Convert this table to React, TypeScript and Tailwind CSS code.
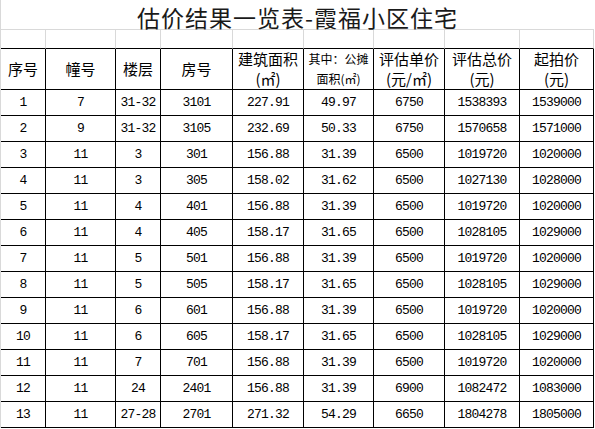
const cols = "grid grid-cols-[45px_70px_45px_72px_71px_70px_71px_75px_74px]";

const rows: string[][] = [
  ["1", "7", "31-32", "3101", "227.91", "49.97", "6750", "1538393", "1539000"],
  ["2", "9", "31-32", "3105", "232.69", "50.33", "6750", "1570658", "1571000"],
  ["3", "11", "3", "301", "156.88", "31.39", "6500", "1019720", "1020000"],
  ["4", "11", "3", "305", "158.02", "31.62", "6500", "1027130", "1028000"],
  ["5", "11", "4", "401", "156.88", "31.39", "6500", "1019720", "1020000"],
  ["6", "11", "4", "405", "158.17", "31.65", "6500", "1028105", "1029000"],
  ["7", "11", "5", "501", "156.88", "31.39", "6500", "1019720", "1020000"],
  ["8", "11", "5", "505", "158.17", "31.65", "6500", "1028105", "1029000"],
  ["9", "11", "6", "601", "156.88", "31.39", "6500", "1019720", "1020000"],
  ["10", "11", "6", "605", "158.17", "31.65", "6500", "1028105", "1029000"],
  ["11", "11", "7", "701", "156.88", "31.39", "6500", "1019720", "1020000"],
  ["12", "11", "24", "2401", "156.88", "31.39", "6900", "1082472", "1083000"],
  ["13", "11", "27-28", "2701", "271.32", "54.29", "6650", "1804278", "1805000"],
];

const sans = "font-['Noto_Sans_CJK_SC',sans-serif]";
const mono = "font-['Liberation_Mono','Noto_Sans_CJK_SC',monospace]";

function HeaderCell({ lines, small }: { lines: string[]; small?: boolean }) {
  return (
    <div className="flex flex-col items-center justify-center border-r border-b border-black leading-[20px]">
      {lines.map((l, i) => (
        <span key={i} className={small ? "text-[12px]" : "text-[15px]"}>
          {l}
        </span>
      ))}
    </div>
  );
}

export default function App() {
  return (
    <div className="w-[595px] h-[429px] bg-white overflow-hidden text-black">
      <div className="w-[594px] border-l border-[#d9d9d9]">
        <div
          className={`h-[30px] text-center border-b border-[#d9d9d9] text-[23px] tracking-[1px] leading-[30px] pt-[2px] text-[#1a1a1a] ${sans}`}
        >
          估价结果一览表-霞福小区住宅
        </div>
        <div className={`${cols} h-[19px]`}>
          {Array.from({ length: 9 }).map((_, i) => (
            <div key={i} className="border-r border-b border-r-[#d9d9d9] border-b-black" />
          ))}
        </div>
        <div className={`${cols} h-[41px] ${sans}`}>
          <HeaderCell lines={["序号"]} />
          <HeaderCell lines={["幢号"]} />
          <HeaderCell lines={["楼层"]} />
          <HeaderCell lines={["房号"]} />
          <HeaderCell lines={["建筑面积", "(㎡)"]} />
          <HeaderCell lines={["其中：公摊", "面积(㎡)"]} small />
          <HeaderCell lines={["评估单价", "(元/㎡)"]} />
          <HeaderCell lines={["评估总价", "(元)"]} />
          <HeaderCell lines={["起拍价", "(元)"]} />
        </div>
        {rows.map((r, ri) => (
          <div key={ri} className={`${cols} h-[26px] ${mono}`}>
            {r.map((c, ci) => (
              <div
                key={ci}
                className="flex items-center justify-center border-r border-b border-black text-[13px] tracking-[-0.8px]"
              >
                {c}
              </div>
            ))}
          </div>
        ))}
      </div>
    </div>
  );
}
